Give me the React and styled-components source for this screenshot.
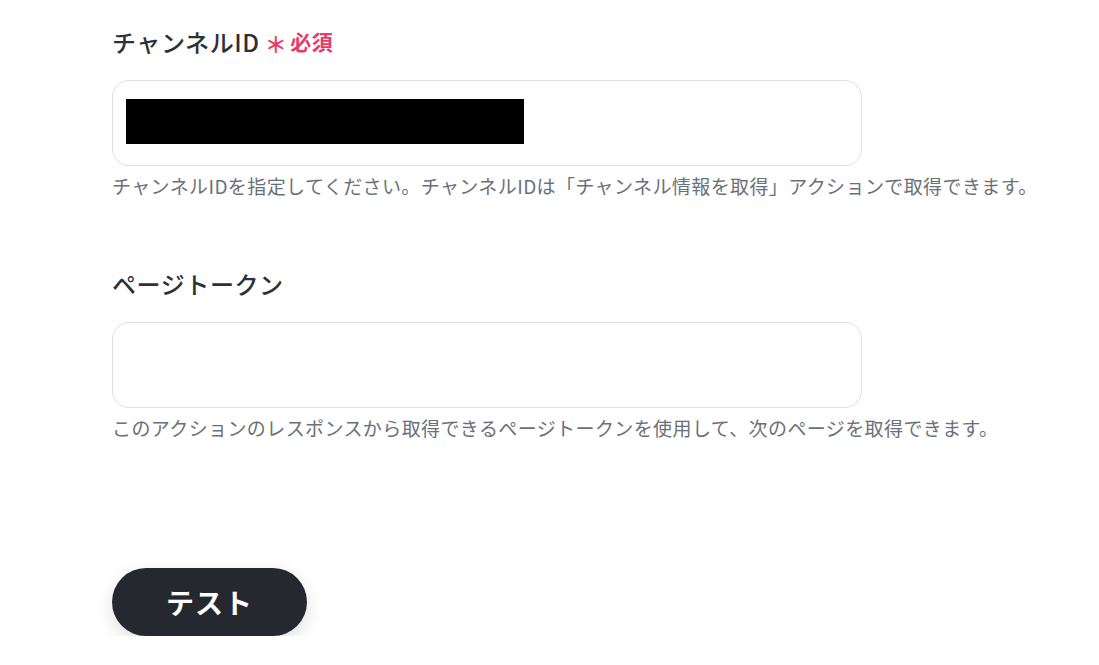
import React from "react";
import styled, { createGlobalStyle } from "styled-components";

const Global = createGlobalStyle`
  html, body { margin: 0; padding: 0; background: #ffffff; }
  body { font-family: "Noto Sans CJK JP", "Noto Sans", sans-serif; }
`;

const Page = styled.div`
  padding: 25px 0 0 112px;
  display: flex;
  flex-direction: column;
  align-items: flex-start;
`;

const Field = styled.section`
  display: flex;
  flex-direction: column;
  align-items: flex-start;
  width: 750px;
  margin-bottom: ${(p) => p.$after}px;
`;

const Label = styled.div`
  display: flex;
  align-items: center;
  height: 32px;
  margin-bottom: 23px;
  font-size: 24px;
  font-weight: 500;
  letter-spacing: 0.6px;
  color: #2d3136;
  white-space: nowrap;
`;

const Required = styled.span`
  display: inline-flex;
  align-items: center;
  margin-left: 5px;
  font-size: 21px;
  font-weight: 700;
  letter-spacing: 0.5px;
  color: #ea3a68;
`;

const Star = styled.span`
  font-size: 22px;
  margin-right: 3px;
  line-height: 1;
  position: relative;
  top: 2px;
`;

const InputBox = styled.div`
  box-sizing: border-box;
  width: 750px;
  height: 86px;
  border: 1px solid #dde0e6;
  border-radius: 17px;
  background: #fff;
  display: flex;
  align-items: center;
  padding: 0 0 3px 13px;
`;

const Redacted = styled.div`
  width: 398px;
  height: 45px;
  background: #000;
`;

const Help = styled.p`
  margin: 8px 0 0;
  height: 24px;
  line-height: 24px;
  font-size: 19px;
  letter-spacing: 0.4px;
  color: #6b7078;
  white-space: nowrap;
`;

const TestButton = styled.button`
  width: 195px;
  height: 68px;
  border: none;
  border-radius: 34px;
  background: #25292f;
  color: #fff;
  font-family: "Noto Sans CJK JP", "Noto Sans", sans-serif;
  font-size: 28px;
  font-weight: 700;
  letter-spacing: 1px;
  box-shadow: 0 6px 18px rgba(0, 0, 0, 0.13);
  cursor: pointer;
`;

export default function App() {
  return (
    <>
      <Global />
      <Page>
        <Field $after={69}>
          <Label>
            チャンネルID
            <Required>
              <Star>＊</Star>必須
            </Required>
          </Label>
          <InputBox>
            <Redacted />
          </InputBox>
          <Help>
            チャンネルIDを指定してください。チャンネルIDは「チャンネル情報を取得」アクションで取得できます。
          </Help>
        </Field>
        <Field $after={128}>
          <Label>ページトークン</Label>
          <InputBox />
          <Help>
            このアクションのレスポンスから取得できるページトークンを使用して、次のページを取得できます。
          </Help>
        </Field>
        <TestButton>テスト</TestButton>
      </Page>
    </>
  );
}
